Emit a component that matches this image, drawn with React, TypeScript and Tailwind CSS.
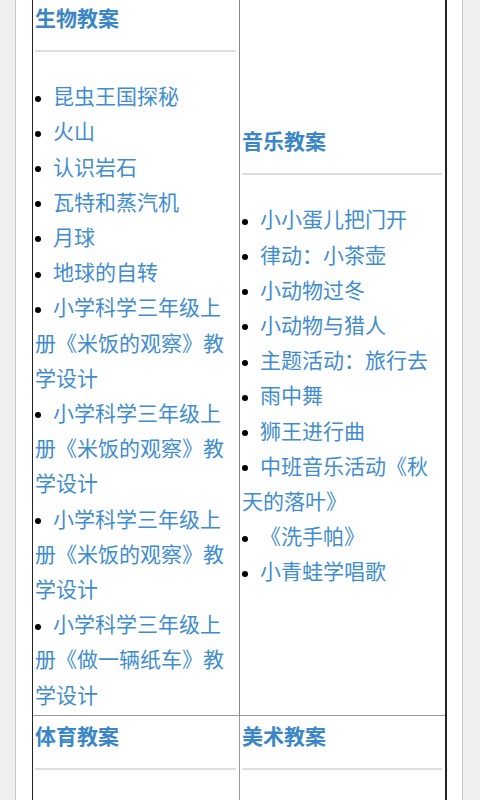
const biology = [
  '昆虫王国探秘',
  '火山',
  '认识岩石',
  '瓦特和蒸汽机',
  '月球',
  '地球的自转',
  '小学科学三年级上册《米饭的观察》教学设计',
  '小学科学三年级上册《米饭的观察》教学设计',
  '小学科学三年级上册《米饭的观察》教学设计',
  '小学科学三年级上册《做一辆纸车》教学设计',
];

const music = [
  '小小蛋儿把门开',
  '律动：小茶壶',
  '小动物过冬',
  '小动物与猎人',
  '主题活动：旅行去',
  '雨中舞',
  '狮王进行曲',
  '中班音乐活动《秋天的落叶》',
  '《洗手帕》',
  '小青蛙学唱歌',
];

function Section({ title, items }: { title: string; items: string[] }) {
  return (
    <div>
      <h3 className="text-[21px] font-bold leading-[35.2px] text-[#3a86c6]">{title}</h3>
      <hr className="mt-[15px] border-0 border-t-2 border-[#dedede]" />
      {items.length > 0 && (
        <ul className="mt-[26px] pb-px">
          {items.map((item, i) => (
            <li key={i} className="text-[21px] leading-[35.2px]">
              <span className="inline-flex w-[18px] items-center align-middle">
                <span className="h-[6px] w-[6px] rounded-full bg-black" />
              </span>
              <a href="#" className="text-[#3f8dcf]">
                {item}
              </a>
            </li>
          ))}
        </ul>
      )}
    </div>
  );
}

export default function App() {
  return (
    <div
      className="min-h-screen bg-[#f0f0f0]"
      style={{ fontFamily: '"Noto Sans CJK SC", "Noto Sans", sans-serif' }}
    >
      <div className="ml-[15px] min-h-screen w-[448px] border-x border-[#c8c8c8] bg-white px-4">
        <table className="-mt-[3px] w-[414px] table-fixed border-separate border-spacing-0 border-t border-l border-r-2 border-[#222]">
          <colgroup>
            <col className="w-[207px]" />
            <col className="w-[205px]" />
          </colgroup>
          <tbody>
            <tr>
              <td className="border-r border-[#888] py-[2px] pr-[3px] pl-[2px] align-middle">
                <Section title="生物教案" items={biology} />
              </td>
              <td className="py-[2px] pr-[3px] pl-[2px] align-middle">
                <Section title="音乐教案" items={music} />
              </td>
            </tr>
            <tr>
              <td className="border-r border-t border-[#999] py-[2px] pr-[3px] pl-[2px] align-top">
                <Section title="体育教案" items={[]} />
                <div className="h-[120px]" />
              </td>
              <td className="border-t border-[#999] py-[2px] pr-[3px] pl-[2px] align-top">
                <Section title="美术教案" items={[]} />
                <div className="h-[120px]" />
              </td>
            </tr>
          </tbody>
        </table>
      </div>
    </div>
  );
}
